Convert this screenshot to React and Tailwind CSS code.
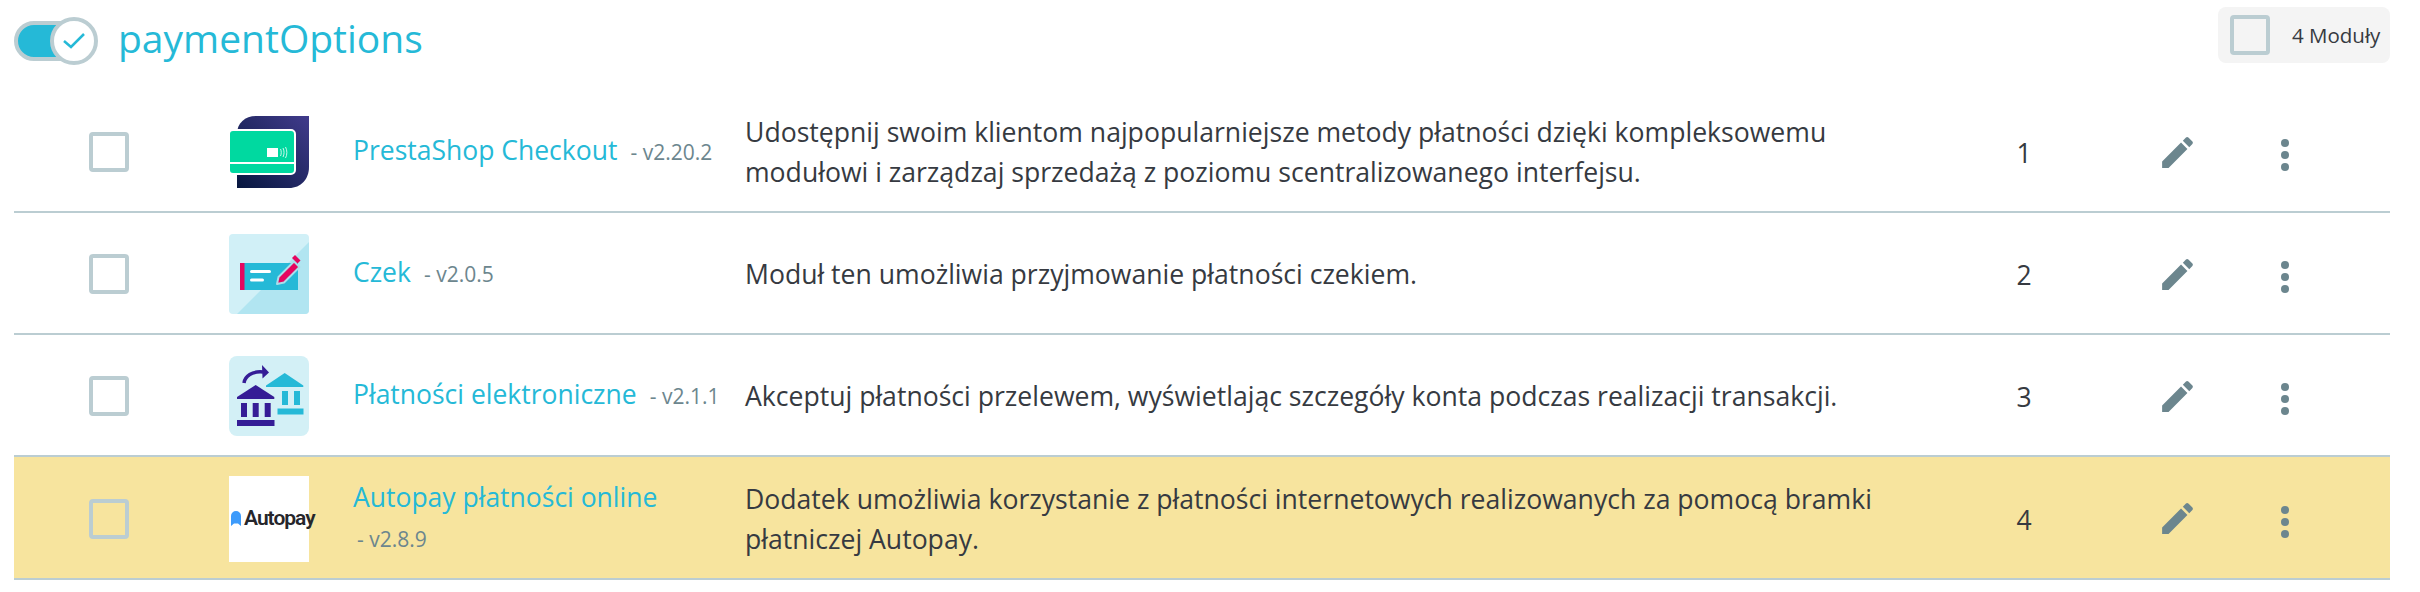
const modules = [
  {
    name: "PrestaShop Checkout",
    version: "v2.20.2",
    desc: "Udostępnij swoim klientom najpopularniejsze metody płatności dzięki kompleksowemu modułowi i zarządzaj sprzedażą z poziomu scentralizowanego interfejsu.",
    logo: <CheckoutLogo />,
  },
  {
    name: "Czek",
    version: "v2.0.5",
    desc: "Moduł ten umożliwia przyjmowanie płatności czekiem.",
    logo: <CheckLogo />,
  },
  {
    name: "Płatności elektroniczne",
    version: "v2.1.1",
    desc: "Akceptuj płatności przelewem, wyświetlając szczegóły konta podczas realizacji transakcji.",
    logo: <BankLogo />,
  },
  {
    name: "Autopay płatności online",
    version: "v2.8.9",
    desc: "Dodatek umożliwia korzystanie z płatności internetowych realizowanych za pomocą bramki płatniczej Autopay.",
    logo: <AutopayLogo />,
    highlighted: true,
  },
];

function CheckoutLogo() {
  return (
    <svg width="80" height="80" viewBox="0 0 80 80" className="block">
      <defs>
        <linearGradient id="psGrad" x1="0" y1="1" x2="1" y2="0">
          <stop offset="0" stopColor="#07173f" />
          <stop offset="1" stopColor="#413b8c" />
        </linearGradient>
      </defs>
      <path d="M8 76V22C8 11 16 4 27 4H80V55C80 67 72 76 60 76Z" fill="url(#psGrad)" />
      <rect x="0" y="18" width="66" height="44" rx="4" fill="#00d9a0" stroke="#fff" strokeWidth="2" />
      <rect x="0" y="50" width="66" height="2" fill="#fff" />
      <rect x="38" y="36" width="11" height="9" fill="#fff" />
      <path d="M51.500 37c1 2 1 5 0 7M54 36c1.400 2.600 1.400 6.400 0 9M56.500 35c1.800 3 1.800 8 0 11" fill="none" stroke="#fff" strokeWidth="0.8" />
    </svg>
  );
}

function CheckLogo() {
  return (
    <svg width="80" height="80" viewBox="0 0 80 80" className="block">
      <rect width="80" height="80" rx="4" fill="#d1f0f7" />
      <path d="M80 8V76a4 4 0 0 1-4 4H8Z" fill="#b1e5f1" />
      <rect x="11" y="29" width="58" height="27" fill="#25b9d7" />
      <rect x="11" y="29" width="4.500" height="27" fill="#e5065f" />
      <rect x="21" y="36" width="21" height="3" rx="1.500" fill="#fff" />
      <rect x="21" y="44.500" width="14" height="3" rx="1.500" fill="#fff" />
      <path d="M48 50l1.500-7L65 27.500l5.500 5.500L55 48.500Z" fill="#e5065f" stroke="#a9dfeb" strokeWidth="2" strokeLinejoin="round" />
      <path d="M63 24l3-3 5.500 5.500-3 3Z" fill="#e5065f" />
    </svg>
  );
}

function BankLogo() {
  return (
    <svg width="80" height="80" viewBox="0 0 80 80" className="block">
      <rect width="80" height="80" rx="8" fill="#d3f0f6" />
      <path d="M37 29.500L55.700 17 74.300 29.500V31H37Z" fill="#25b9d7" />
      <rect x="53" y="35" width="6" height="14" fill="#25b9d7" />
      <rect x="65" y="35" width="6" height="14" fill="#25b9d7" />
      <rect x="48.500" y="52.500" width="26" height="6" fill="#25b9d7" />
      <path d="M8 41L26.700 29 45.300 41V43H8Z" fill="#351d96" />
      <rect x="12" y="47" width="6" height="14" fill="#351d96" />
      <rect x="23.700" y="47" width="6" height="14" fill="#351d96" />
      <rect x="35.700" y="47" width="6" height="14" fill="#351d96" />
      <rect x="8" y="64" width="37.500" height="6" fill="#351d96" />
      <path d="M15 27c1-7 8-12 19-11" fill="none" stroke="#351d96" strokeWidth="3.500" />
      <path d="M33 9l7 7.500-6.500 6Z" fill="#351d96" />
    </svg>
  );
}

function AutopayLogo() {
  return (
    <div className="flex h-[86px] w-[80px] items-center bg-white pl-[2px]">
      <svg width="10" height="15" viewBox="0 0 10 15" className="shrink-0">
        <path d="M0 15V5a5 5 0 0 1 10 0v10L7 12.500H3Z" fill="#3d9bfb" />
      </svg>
      <span className="ml-[3px] font-['Roboto',sans-serif] text-[21px] font-semibold tracking-[-1px] text-[#26262b]">
        Autopay
      </span>
    </div>
  );
}

function Checkbox() {
  return <div className="size-10 rounded border-4 border-[#bbcdd2]" />;
}

function ModuleRow({ module, order }) {
  return (
    <div
      className={`grid grid-cols-[215px_124px_392px_1245px_68px_1fr] items-center border-b-2 border-[#bbcdd2] pt-[2px] ${
        module.highlighted ? "h-[123px] bg-[#f7e49e]" : "h-[122px]"
      }`}
    >
      <div className="pl-[75px]">
        <Checkbox />
      </div>
      <div>{module.logo}</div>
      <div className="pr-[15px] leading-[38px]">
        <a className="mr-[5px] text-[26.500px] text-[#25b9d7]">{module.name}</a>{" "}
        <span className="ml-1 inline-block text-[21px] text-[#6c868e]">- {module.version}</span>
      </div>
      <p className="pr-[60px] text-[26.600px] leading-[40px]">{module.desc}</p>
      <div className="mt-1 text-center text-[26.500px]">{order}</div>
      <div className="flex items-center pl-[99px]">
        <svg width="41" height="41" viewBox="0 0 24 24" fill="#6c868e">
          <path d="M3 17.250V21h3.750L17.810 9.940l-3.750-3.750L3 17.250zM20.710 7.040c.390-.390.390-1.020 0-1.410l-2.340-2.340c-.390-.390-1.020-.390-1.410 0l-1.830 1.830 3.750 3.750 1.830-1.830z" />
        </svg>
        <svg width="48" height="48" viewBox="0 0 24 24" fill="#6c868e" className="ml-[63px] mt-[6px]">
          <circle cx="12" cy="6" r="2" />
          <circle cx="12" cy="12" r="2" />
          <circle cx="12" cy="18" r="2" />
        </svg>
      </div>
    </div>
  );
}

export default function App() {
  return (
    <div className="min-h-[592px] bg-white pl-[14px] pr-[30px] font-['Open_Sans',sans-serif] text-[#363a41]">
      <div className="flex h-[91px] justify-between pt-[7px]">
        <div className="flex items-start">
          <div className="relative mt-[14px] h-10 w-[70px] rounded-full border-4 border-[#bbcdd2] bg-[#25b9d7]">
            <div className="absolute left-[32px] top-[-8px] flex size-12 items-center justify-center rounded-full border-4 border-[#bbcdd2] bg-white">
              <svg width="24" height="18" viewBox="0 0 24 18" fill="none" stroke="#25b9d7" strokeWidth="2.500">
                <path d="M2 9l7 6L22 2" />
              </svg>
            </div>
          </div>
          <h2 className="ml-[34px] mt-[5px] text-[39px] leading-[52px] text-[#25b9d7]">paymentOptions</h2>
        </div>
        <div className="flex h-14 w-[172px] items-center rounded-lg bg-[#f4f4f4] pl-3">
          <Checkbox />
          <span className="ml-[22px] text-[20.500px]">4 Moduły</span>
        </div>
      </div>
      {modules.map((m, i) => (
        <ModuleRow key={m.name} module={m} order={i + 1} />
      ))}
    </div>
  );
}
